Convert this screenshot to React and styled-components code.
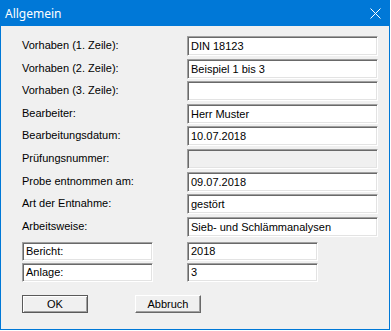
import React from 'react'
import styled, { createGlobalStyle } from 'styled-components'

const fields = [
  { label: 'Vorhaben (1. Zeile):', value: 'DIN 18123' },
  { label: 'Vorhaben (2. Zeile):', value: 'Beispiel 1 bis 3' },
  { label: 'Vorhaben (3. Zeile):', value: '' },
  { label: 'Bearbeiter:', value: 'Herr Muster' },
  { label: 'Bearbeitungsdatum:', value: '10.07.2018' },
  { label: 'Prüfungsnummer:', value: '', disabled: true },
  { label: 'Probe entnommen am:', value: '09.07.2018' },
  { label: 'Art der Entnahme:', value: 'gestört' },
  { label: 'Arbeitsweise:', value: 'Sieb- und Schlämmanalysen' },
]

const extras = [
  { label: 'Bericht:', value: '2018' },
  { label: 'Anlage:', value: '3' },
]

export default function App() {
  return (
    <>
      <GlobalStyle />
      <Window>
        <TitleBar>
          <Title>Allgemein</Title>
          <svg width="11" height="11" viewBox="0 0 11 11">
            <path d="M0.5 0.5 L10.5 10.5 M10.5 0.5 L0.5 10.5" stroke="#fff" strokeWidth="1" />
          </svg>
        </TitleBar>
        <Body>
          <Form>
            {fields.map((f) => (
              <Row key={f.label}>
                <Label>{f.label}</Label>
                <Edit $disabled={f.disabled}>{f.value}</Edit>
              </Row>
            ))}
          </Form>
          <Extras>
            {extras.map((f) => (
              <SmallRow key={f.label}>
                <Edit>{f.label}</Edit>
                <Edit>{f.value}</Edit>
              </SmallRow>
            ))}
          </Extras>
          <Buttons>
            <Button $default>OK</Button>
            <Button>Abbruch</Button>
          </Buttons>
        </Body>
      </Window>
    </>
  )
}

const GlobalStyle = createGlobalStyle`
body {
  margin: 0;
  background: #ffffff;
  font-family: "Liberation Sans", Arial, sans-serif;
}
`;

const Window = styled.div`
width: 390px;
height: 330px;
box-sizing: border-box;
border: 1px solid #0078d7;
border-top: none;
background: #f0f0f0;
display: flex;
flex-direction: column;
`;

const TitleBar = styled.div`
height: 26px;
background: #0078d7;
color: #ffffff;
display: flex;
align-items: center;
justify-content: space-between;
padding: 0 8px 0 4px;
`;

const Title = styled.span`
font-family: "Noto Sans", "Open Sans", sans-serif;
font-size: 12px;
`;

const Body = styled.div`
padding: 10px 0 0 21px;
`;

const Form = styled.div`
display: flex;
flex-direction: column;
gap: 2.6px;
`;

const Row = styled.div`
display: grid;
grid-template-columns: 165px 191px;
height: 20px;
align-items: center;
`;

const Label = styled.div`
font-size: 11px;
color: #000000;
margin-top: -2px;
`;

const Edit = styled.div`
height: 100%;
box-sizing: border-box;
border: 1px solid;
border-color: #a0a0a0 #ffffff #ffffff #a0a0a0;
box-shadow: inset 1px 1px 0 #696969, inset -1px -1px 0 #e3e3e3;
background: ${(p) => (p.$disabled ? '#f0f0f0' : '#ffffff')};
font-size: 11px;
color: #000000;
padding: 0 3px;
display: flex;
align-items: center;
white-space: nowrap;
`;

const Extras = styled.div`
display: flex;
flex-direction: column;
gap: 2px;
margin-top: 5px;
`;

const SmallRow = styled.div`
display: grid;
grid-template-columns: 131px 131px;
column-gap: 34px;
height: 19px;
`;

const Buttons = styled.div`
display: flex;
gap: 47px;
margin-top: 13px;
`;

const Button = styled.div`
width: 66px;
height: 18px;
box-sizing: border-box;
background: #f0f0f0;
font-size: 11px;
color: #000000;
display: flex;
align-items: center;
justify-content: center;
border: 1px solid;
border-color: ${(p) => (p.$default ? '#5a5a5a' : '#ffffff #696969 #696969 #ffffff')};
box-shadow: ${(p) =>
  p.$default
    ? 'inset 1px 1px 0 #ffffff, inset -1px -1px 0 #a0a0a0'
    : 'inset -1px -1px 0 #a0a0a0'};
`;
